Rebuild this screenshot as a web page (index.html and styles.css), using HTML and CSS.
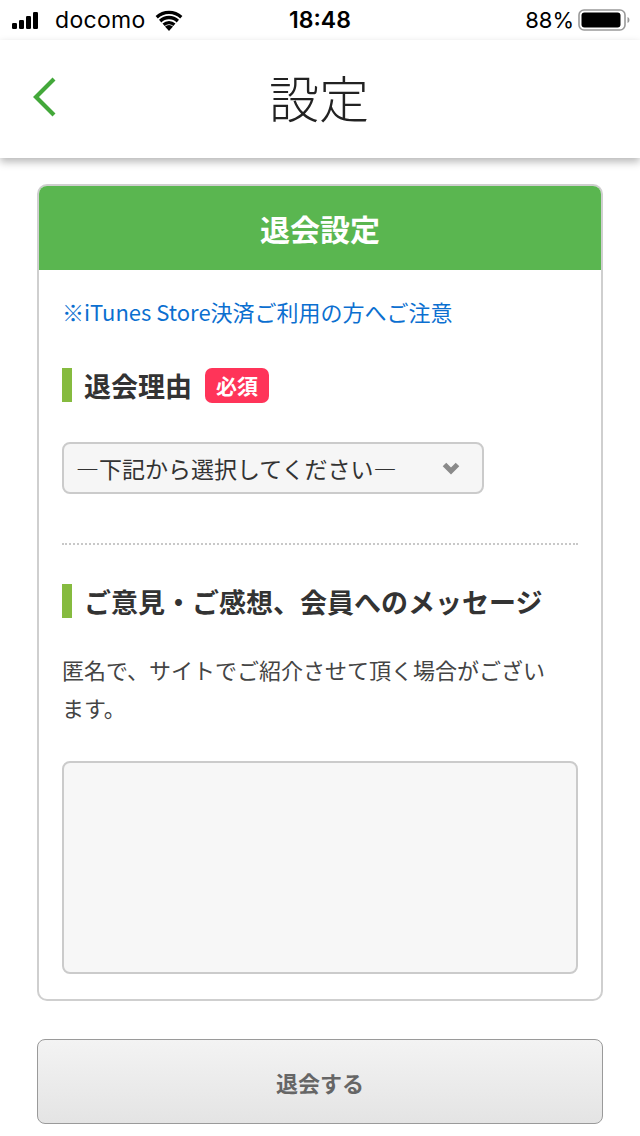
FILE: index.html
```html
<!DOCTYPE html>
<html lang="ja">
<head>
<meta charset="utf-8">
<link rel="stylesheet" href="styles.css">
</head>
<body>
<div class="status">
  <div class="status-left">
    <svg class="signal" width="28" height="18" viewBox="0 0 28 18">
      <rect x="0" y="11" width="5" height="6" rx="1.2" fill="#000"/>
      <rect x="7" y="8" width="5" height="9" rx="1.2" fill="#000"/>
      <rect x="14" y="4" width="5" height="13" rx="1.2" fill="#000"/>
      <rect x="21" y="0" width="5" height="17" rx="1.2" fill="#000"/>
    </svg>
    <span class="carrier">docomo</span>
    <svg class="wifi" width="28" height="21" viewBox="0 0 28 21">
      <path d="M14 21 L10 16.5 A6 6 0 0 1 18 16.5 Z" fill="#000"/>
      <path d="M7.5 13.6 A9.5 9.5 0 0 1 20.5 13.6 L18.3 16 A6.3 6.3 0 0 0 9.7 16 Z" fill="#000"/>
      <path d="M4 9.8 A14.5 14.5 0 0 1 24 9.8 L21.7 12.4 A11 11 0 0 0 6.3 12.4 Z" fill="#000"/>
      <path d="M0.6 6 A19.5 19.5 0 0 1 27.4 6 L25.2 8.6 A16 16 0 0 0 2.8 8.6 Z" fill="#000"/>
    </svg>
  </div>
  <div class="time">18:48</div>
  <div class="status-right">
    <span class="pct">88%</span>
    <svg class="battery" width="52" height="22" viewBox="0 0 52 22">
      <rect x="1" y="1" width="46" height="20" rx="5" fill="none" stroke="#999" stroke-width="1.6"/>
      <rect x="3.5" y="3.5" width="39" height="15" rx="3" fill="#000"/>
      <path d="M49.5 8 Q51.5 8.5 51.5 11 Q51.5 13.5 49.5 14 Z" fill="#999"/>
    </svg>
  </div>
</div>

<header class="navbar">
  <svg class="back" width="26" height="40" viewBox="0 0 26 40">
    <path d="M22 2 L4 20 L22 38" fill="none" stroke="#43a83a" stroke-width="4.2"/>
  </svg>
  <h1 class="nav-title">設定</h1>
</header>

<main class="content">
  <section class="card">
    <div class="card-head">退会設定</div>
    <div class="card-body">
      <a class="notice" href="#">※iTunes Store決済ご利用の方へご注意</a>

      <div class="sec-title sec-first">
        <span class="sec-text">退会理由</span>
        <span class="badge">必須</span>
      </div>

      <div class="select">
        <span class="select-text">―下記から選択してください―</span>
        <svg class="select-icon" width="18" height="16" viewBox="0 0 18 16">
          <path d="M2.5 4.5 L9 11 L15.5 4.5" fill="none" stroke="#8a8a8a" stroke-width="5" stroke-linejoin="miter"/>
        </svg>
      </div>

      <hr class="divider">

      <div class="sec-title">
        <span class="sec-text">ご意見・ご感想、会員へのメッセージ</span>
      </div>

      <p class="desc">匿名で、サイトでご紹介させて頂く場合がございます。</p>

      <div class="textarea"></div>
    </div>
  </section>

  <button class="submit" type="button">退会する</button>
</main>
</body>
</html>
```

FILE: styles.css
```css
* { box-sizing: border-box; }

html, body {
  margin: 0;
  padding: 0;
  background: #fff;
}

body {
  width: 640px;
  height: 1136px;
  overflow: hidden;
  font-family: "Noto Sans CJK JP", "Noto Sans", sans-serif;
  color: #333;
}

/* status bar */
.status {
  height: 40px;
  display: flex;
  align-items: center;
  justify-content: space-between;
  padding: 0 10px 0 12px;
  font-family: "Inter", "Liberation Sans", sans-serif;
  color: #000;
  position: relative;
}

.status-left {
  display: flex;
  align-items: center;
}

.signal { margin-top: 2px; }

.carrier {
  font-size: 23px;
  margin-left: 15px;
  letter-spacing: 0.3px;
}

.wifi { margin-left: 9px; }

.time {
  position: absolute;
  left: 0;
  right: 0;
  text-align: center;
  font-size: 23px;
  font-weight: 600;
  pointer-events: none;
}

.status-right {
  display: flex;
  align-items: center;
  gap: 4px;
}

.pct { font-size: 22px; }

/* nav */
.navbar {
  height: 118px;
  display: flex;
  align-items: center;
  justify-content: center;
  position: relative;
  background: #fff;
  box-shadow: 0 4px 8px rgba(0, 0, 0, 0.28);
}

.back {
  position: absolute;
  left: 32px;
  top: 37px;
}

.nav-title {
  margin: 0 0 0 -2px;
  font-size: 50px;
  font-weight: 300;
  color: #222;
  line-height: 1;
  margin-top: -6px;
}

/* content */
.content {
  padding: 26px 37px 0;
}

.card {
  border: 2px solid #cfcfcf;
  border-radius: 10px;
  overflow: hidden;
}

.card-head {
  height: 86px;
  margin: -2px -2px 0;
  background: #5ab650;
  color: #fff;
  font-size: 30px;
  font-weight: 700;
  display: flex;
  align-items: center;
  justify-content: center;
  padding-top: 2px;
}

.card-body {
  padding: 26px 23px 25px;
  display: flex;
  flex-direction: column;
  align-items: flex-start;
}

.notice {
  color: #0b6fd0;
  text-decoration: none;
  font-size: 22px;
  line-height: 30px;
}

.sec-title {
  display: flex;
  align-items: center;
  border-left: 10px solid #86bb3f;
  height: 34px;
  padding-left: 12px;
  margin-top: 39px;
}

.sec-first { margin-top: 42px; }

.sec-text {
  font-size: 27px;
  font-weight: 700;
  color: #333;
  line-height: 1;
}

.badge {
  margin-left: 13px;
  background: #ff3459;
  color: #fff;
  font-size: 21px;
  font-weight: 700;
  border-radius: 7px;
  width: 64px;
  height: 35px;
  display: flex;
  align-items: center;
  justify-content: center;
}

.select {
  margin-top: 40px;
  width: 422px;
  height: 52px;
  background: #f6f6f6;
  border: 2px solid #cbcbcb;
  border-radius: 8px;
  display: flex;
  align-items: center;
  justify-content: space-between;
  padding: 0 22px 0 12px;
}

.select-text {
  font-size: 23px;
  color: #333;
}

.divider {
  align-self: stretch;
  margin: 49px 0 0;
  border: 0;
  border-top: 2px dotted #c8c8c8;
  height: 0;
}

.desc {
  margin: 32px 0 0;
  font-size: 22px;
  line-height: 38px;
  color: #444;
  width: 500px;
}

.textarea {
  margin-top: 35px;
  align-self: stretch;
  height: 213px;
  background: #f7f7f7;
  border: 2px solid #cbcbcb;
  border-radius: 8px;
}

.submit {
  display: flex;
  align-items: center;
  justify-content: center;
  width: 100%;
  height: 85px;
  margin-top: 38px;
  border: 1px solid #9a9a9a;
  border-radius: 8px;
  background: linear-gradient(#f3f3f3, #e4e4e4);
  font-family: "Noto Sans CJK JP", sans-serif;
  font-size: 22px;
  font-weight: 700;
  color: #666;
  padding: 0;
}
```
